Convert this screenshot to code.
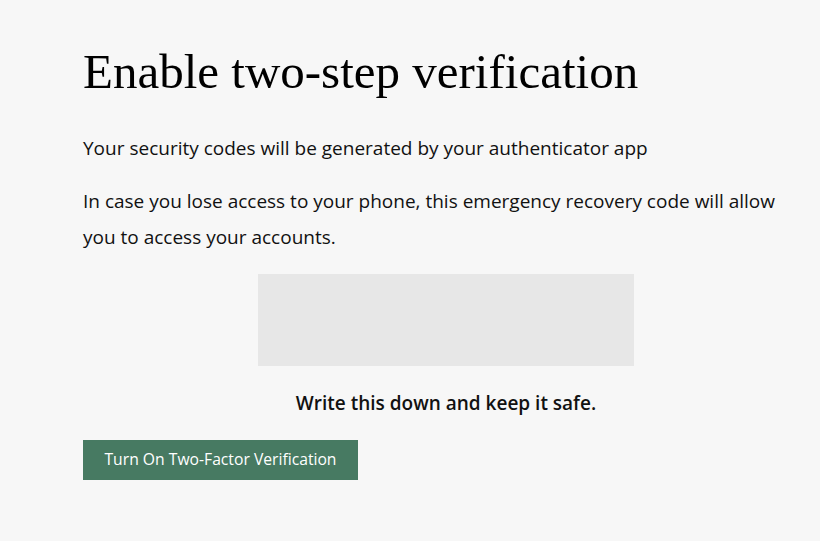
export default function App() {
  return (
    <div className="min-h-screen bg-[#f7f7f7] font-['Open_Sans',sans-serif] text-[#111]">
      <div className="w-[726px] ml-[83px] pt-[40px]">
        <h1 className="font-['Liberation_Serif',serif] text-[49px] leading-[64px] text-black">
          Enable two-step verification
        </h1>
        <p className="mt-[26px] text-[19px] leading-[36px]">
          Your security codes will be generated by your authenticator app
        </p>
        <p className="mt-[17px] max-w-[705px] text-[19px] leading-[36px]">
          In case you lose access to your phone, this emergency recovery code will allow you to access your accounts.
        </p>
        <div className="mx-auto mt-[19px] h-[92px] w-[376px] bg-[#e7e7e7]" />
        <p className="mt-[21px] text-center text-[19px] font-semibold leading-[32px]">
          Write this down and keep it safe.
        </p>
        <button className="mt-[21px] h-[40px] w-[275px] bg-[#477a62] text-[15.7px] text-white">
          Turn On Two-Factor Verification
        </button>
      </div>
    </div>
  );
}
